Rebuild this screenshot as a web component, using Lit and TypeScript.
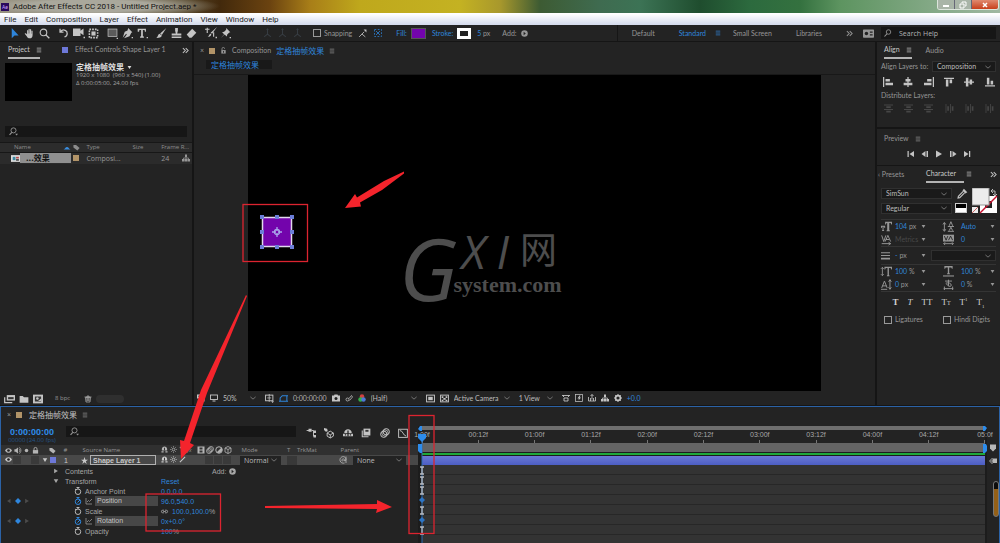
import { LitElement, html, svg, css, nothing } from "lit";
import { customElement, property } from "lit/decorators.js";

const S = (d: string, w = 1.5) => svg`<path d=${d} fill="none" stroke="currentColor" stroke-width=${w}/>`;
const F = (d: string) => svg`<path d=${d} fill="currentColor"/>`;

/* Every glyph is drawn on a 16 x 16 grid. */
const ICONS: Record<string, unknown> = {
  arrow: F("M4 0v15l4-4h6z"),
  hand: svg`${F("M4.500 9V3.500a1 1 0 0 1 1.700 0V8h.4V1.800a1 1 0 0 1 1.700 0V8h.4V2.300a1 1 0 0 1 1.700 0V8.500h.4V4.500a1 1 0 0 1 1.700 0V10c0 3-1.500 5-4 5-2.500 0-3.500-1-4.500-3L1 8.500c0-1.200 1.300-1.300 2-.5z")}`,
  zoom: svg`<circle cx="6.500" cy="6.500" r="4.800" fill="none" stroke="currentColor" stroke-width="1.600"/>${S("M10 10l5 5", 2)}`,
  rotate: S("M3 1v5h5M3.500 6C5 3 8 2.300 10.500 3.500c4 1.700 4 8-1 9.500", 1.9),
  camera: F("M0 2h10v3l4-3v9l-4-3v4H0zM14 13h2v2h-2z"),
  pan: svg`${F("M5 5h6v6H5z")}<path d="M2 2h12v12H2z" fill="none" stroke="currentColor" stroke-width="2.200" stroke-dasharray="2.500 1.500"/>`,
  rect: svg`<rect x="1.500" y="1.500" width="13" height="11" fill="#5a5a5a" stroke="currentColor"/>${F("M14 14h2v2h-2z")}`,
  pen: F("M9 0l6 6-1.500 1L11 12l-8 3 4-5.500-1-1-5 5.500L4 5.500l4-2zM14 13h2v2h-2z"),
  type: F("M1 1h12v4.500h-1.500L11 3H8.500v9l1.500.5V14H4.500v-1.500L6 12V3H3.500L3 5.500H1zM14 13h2v2h-2z"),
  brush: F("M15 0L8.500 10 6 8zM5 8.500l3.500 2.500c-1 3.500-4.500 3.500-8 3.500 2.500-1.500 2-5 4.500-6z"),
  stamp: F("M6 0h4v4L9 8h6v3H1V8h6L6 4zM1 12.500h14v2H1z"),
  eraser: F("M9 1l6 6-7 7H5L1 9.500z"),
  roto: svg`${F("M16 0L9.500 9 7.500 7.500zM7 8.500l1.500 1.500c-1 3-3 3-5 3 2-1 2-3 3.500-4.500zM14 13h2v2h-2z")}${S("M3 1v7M0 3h6M11.500 7v6", 1.500)}`,
  pin: F("M9 0l6 6-1.500.5-3 3-.5 3L6.500 9.500 1 15l5-6-3-3 3-.5 3-3zM14 13h2v2h-2z"),
  axis: svg`${S("M8 2v7M8 9l-5 4M8 9l5 4")}${F("M6 3l2-3 2 3z")}`,
  snapA: svg`${S("M2 14l9-9M7 9l6 5")}${F("M10 1h5v5z")}`,
  snapB: svg`<path d="M1 1h14v14H1z" fill="none" stroke="currentColor" stroke-width="1.500" stroke-dasharray="3.500 3"/>${S("M4 4l8 8M12 4l-8 8", 1.5)}`,
  plus: svg`<circle cx="8" cy="8" r="7.500" fill="currentColor"/><path d="M6 4l5 4-5 4z" fill="#222"/>`,
  menu: S("M2 3h12M2 8h12M2 13h12", 1.8),
  more: S("M2 2.500L7.500 8 2 13.500M8.500 2.500L14 8l-5.500 5.500", 2.3),
  film: svg`<rect x="0" y="2" width="16" height="12" rx="1" fill="currentColor"/><circle cx="5" cy="8" r="2.500" fill="#222"/><path d="M10 5h4v2h-4zM10 9h4v2h-4z" fill="#222"/>`,
  search: svg`<circle cx="9" cy="6" r="4.500" fill="none" stroke="currentColor" stroke-width="1.700"/>${S("M6 9.500L1 15", 2.2)}`,
  searchMenu: svg`<circle cx="8" cy="6" r="4.500" fill="none" stroke="currentColor" stroke-width="1.600"/>${S("M5 9.500L1 14", 2)}${F("M11 12h5l-2.500 3z")}`,
  lock: svg`${F("M2 7h12v8H2z")}${S("M4.500 7V4.500a3.500 3.500 0 0 1 7 0V7", 2)}`,
  unlock: svg`${F("M3 7h10v8H3z")}${S("M4.500 7V4a3 3 0 0 1 6 0", 1.8)}<path d="M7 9h2v4H7z" fill="#222"/>`,
  tag: F("M1 2h6l8 7-5 6L1 8z"),
  tree: svg`${F("M6 1h4v5H6zM0 10h5v5H0zM5.700 10h4.600v5H5.700zM11 10h5v5h-5z")}${S("M3 10V8h10v2M8 5v6", 1.5)}`,
  comp: svg`<rect x="0" y="2" width="16" height="12" fill="#ddd"/><path d="M3 5h5v6H3z" fill="#3d87a0"/><path d="M9 5h5v3H9z" fill="#b34a4a"/><path d="M9 9h5v3H9z" fill="#444"/>`,
  up: svg`<path d="M1 11c3-1 4-5 7-5s4 4 7 5z" fill="#3a8ee0"/>`,
  interpret: svg`${F("M4 3h12v8H4z")}${S("M1 6v8h11", 1.8)}<path d="M6 6h8v3H6z" fill="#333"/>`,
  folder: F("M1 3h5l2 2h7v9H1z"),
  newcomp: svg`${F("M0 1h16v14H0z")}<path d="M3 4h10v8H3z" fill="#333"/><circle cx="7" cy="7" r="2" fill="currentColor"/>${F("M8 11l5-4v4z")}`,
  trash: svg`${S("M3 5h10l-1 9H4zM1 4h14M6 4V2h4v2M6 6v6M8 6v6M10 6v6", 1.3)}`,
  chevron: S("M1 5l7 6 7-6", 2),
  tri: F("M2 3h12l-6 10z"),
  triR: F("M3 2v12l10-6z"),
  play: F("M2 1v14l12-7z"),
  first: F("M1 2h2.500v12H1zM14 2v12L5 8z"),
  prev: F("M9 2v12L1 8zM11 2h3v12h-3z"),
  next: F("M2 2h3v12H2zM7 2v12l8-6z"),
  last: F("M2 2v12l9-6zM12 2h2.500v12H12z"),
  alL: F("M0 0h2v16H0zM4 3h7v4H4zM4 9h12v4H4z"),
  alC: F("M7 0h2v16H7zM4 3h8v4H4zM1 9h14v4H1z"),
  alR: F("M14 0h2v16h-2zM5 3h7v4H5zM0 9h12v4H0z"),
  alT: F("M0 1h16v2H0zM3 4h4v11H3zM9 4h4v6H9z"),
  alM: F("M0 7h16v2H0zM3 1h4v14H3zM9 4h4v8H9z"),
  alB: F("M0 13h16v2H0zM3 1h4v11H3zM9 6h4v6H9z"),
  diH: F("M0 1h16v1.500H0zM4 4h8v3H4zM0 9h16v1.500H0zM4 12h8v3H4z"),
  diV: F("M1 0h1.500v16H1zM4 4h3v8H4zM9 0h1.500v16H9zM12 4h3v8h-3z"),
  eyedrop: svg`${F("M10 1l5 5-3 2-4-4z")}${S("M9 5l-7 7-.5 2.500L4 14l7-7", 1.6)}`,
  lines: F("M0 2h16v2H0zM0 7h16v2H0zM0 12h16v3H0z"),
  size: F("M6 1h10v4h-1l-1-2h-2v10l1 1v1H8v-1l1-1V3H8L7 5H6zM0 7h6v3H5L4.500 8.500h-.8V13l.8.500v1h-3v-1l.8-.5V8.500h-.8L1 10H0z"),
  leading: svg`${S("M2 3v11M0 5l2-3 2 3M0 12l2 3 2-3M7 15h9M7 8h9", 1.4)}${S("M9 7l2.500-6L14 7M9 14l2.500-5 2.500 5", 1.4)}`,
  kern: svg`${S("M1 2l3 9 3-9M6 11l4-9 4 9M7 8h5M1 14h13M11 12l3 2-3 2", 1.4)}`,
  track: svg`${F("M0 1h16v10H0z")}<path d="M2 3l2.500 6L7 3M8 9l3-6 3 6" fill="none" stroke="#222" stroke-width="1.300"/>${S("M1 14h14M3 12l-2 2 2 2M13 12l2 2-2 2", 1.3)}`,
  vscale: svg`${F("M5 1h11v4h-1l-1-2h-2.500v10l1 1v1H8.500v-1l1-1V3H7L6 5H5z")}${S("M2 2v12M0 4l2-2 2 2M0 12l2 2 2-2", 1.3)}`,
  hscale: svg`${F("M2 0h12v4h-1l-1-2H9v8l1 1v1H6v-1l1-1V2H4L3 4H2z")}${S("M0 14.500h16", 1.600)}`,
  shift: svg`${S("M1 13l4-10 4 10M2 10h6M0 15h9M13 1v13M11 4l2-3 2 3M11 12l2 3 2-3", 1.4)}`,
  tsume: svg`${S("M3 3h10M8 1v9M4 6c4-1 8 0 8 3s-5 2-7-2M1 14h14M2 11v5M14 11v5", 1.4)}`,
  eye: svg`<path d="M0 8c4-7 12-7 16 0-4 7-12 7-16 0z" fill="currentColor"/><circle cx="8" cy="8" r="3" fill="#222"/>`,
  speaker: svg`${F("M1 5h3l5-4v14l-5-4H1z")}${S("M11 4c3 2 3 6 0 8M12 1c5 3 5 11 0 14", 1.7)}`,
  solo: svg`<circle cx="8" cy="8" r="4" fill="currentColor"/>`,
  shy: svg`${F("M2 7c0-8 12-8 12 0v3H2zM1 12h5v3H1zM10 12h5v3h-5z")}<path d="M7 4h2v6H7z" fill="#222"/>`,
  sun: svg`<circle cx="8" cy="8" r="3" fill="none" stroke="currentColor" stroke-width="1.800"/>${S("M8 0v3M8 13v3M0 8h3M13 8h3M2.500 2.500l2 2M11.500 11.500l2 2M2.500 13.500l2-2M11.500 4.500l2-2", 1.3)}`,
  slash: S("M2 14L14 2", 2.4),
  back: S("M2 2l12 12", 2.4),
  frames: svg`<rect x="1" y="1" width="14" height="14" fill="currentColor"/><path d="M5 3h6v4H5zM5 9h6v4H5z" fill="#333"/>`,
  blur: svg`<circle cx="6" cy="10" r="5" fill="none" stroke="currentColor" stroke-width="1.600"/><circle cx="8" cy="8" r="5" fill="none" stroke="currentColor" stroke-width="1.200"/><circle cx="10" cy="6" r="5" fill="none" stroke="currentColor" stroke-width="1.600"/>`,
  adjust: svg`<circle cx="8" cy="8" r="6.500" fill="none" stroke="currentColor" stroke-width="2"/>${F("M3 13L13 3c4 4 0 14-10 10z")}`,
  cube: S("M8 1l6 3v8l-6 3-6-3V4zM2 4l6 3 6-3M8 7v8", 1.6),
  star: F("M8 0l2 6h6l-5 3.500 2 6.500-5-4-5 4 2-6.500L0 6h6z"),
  watch: svg`<circle cx="8" cy="9.500" r="5.500" fill="none" stroke="currentColor" stroke-width="1.800"/>${S("M8 4V1M5 1h6M2 4l2 1.500", 1.8)}`,
  watchOn: svg`<circle cx="8" cy="9.500" r="5.500" fill="none" stroke="currentColor" stroke-width="2"/>${S("M8 4V1M5 1h6M7 11l5-5", 2)}`,
  graph: S("M2 2v12h12M4 10l3-3 2 2 5-5", 1.4),
  kf: F("M8 0l8 8-8 8-8-8z"),
  kL: F("M12 2v12L3 8z"),
  link: svg`<path d="M7 5H4a3 3 0 0 0 0 6h3M9 5h3a3 3 0 0 1 0 6H9M5 8h6" fill="none" stroke="currentColor" stroke-width="2"/>`,
  spiral: S("M9 9c-1 2-4 1-3-1.500 1-3 6-2 5 2 3 1 4-4 1-7C8-1 1 3 2 9c1 5 6 6 9 5M14 1v13", 1.4),
  mini: svg`${S("M1 4h5M9 4h3v9h4M12 7h4", 1.500)}${F("M4 1h5v5H4zM12 4h4v4h-4zM12 11h4v4h-4z")}`,
  draft: svg`${S("M10 5l5 3v5l-5 3-5-3V8zM5 8l5 3 5-3M10 11v5", 1.5)}${F("M0 0l5 1 1 4-3 1-3-3z")}`,
  shyBig: svg`${F("M2 8c0-8 12-8 12 0zM0 9h16v4H0z")}<path d="M7 4h2v9H7zM3 10h2v2H3zM11 10h2v2h-2z" fill="#222"/>`,
  blend: svg`${F("M4 1h11v11H4z")}${S("M2 4v10h10", 1.7)}<path d="M7 3h5v3H7z" fill="#333"/>`,
  gedit: svg`<rect x="1" y="2" width="14" height="13" fill="none" stroke="currentColor" stroke-width="1.500"/>${S("M3 4c5 0 5 8 10 9", 1.5)}`,
  monitor: svg`<rect x="1" y="2" width="14" height="9" fill="none" stroke="currentColor" stroke-width="1.800"/>${F("M5 13h6v2H5z")}`,
  preview: svg`${F("M0 1h12v8H0zM8 8h7v7H8z")}<path d="M3 3h3v3H3zM10 10h3v2h-3z" fill="#222"/>`,
  safe: svg`<rect x="1" y="2" width="13" height="10" fill="none" stroke="currentColor" stroke-width="1.700"/>${S("M7.500 0v14M4 7h7", 1.4)}${F("M11 13h5l-2.500 3z")}`,
  mask: S("M2 13V7l4-4h8v10zM0 13h4M12 3h4M12 13h4M5 3h3", 1.8),
  snap: svg`${F("M0 3h4l1-2h6l1 2h4v12H0z")}<circle cx="8" cy="9" r="3" fill="#222"/>`,
  show: svg`<circle cx="5" cy="11" r="3" fill="none" stroke="currentColor" stroke-width="1.500"/>${S("M8 9l5-6 2 3-6 7", 1.5)}`,
  rgb: svg`<circle cx="8" cy="5" r="4.500" fill="#d24040"/><circle cx="5" cy="11" r="4.500" fill="#32b04a"/><circle cx="11" cy="11" r="4.500" fill="#4d78d8"/>`,
  roi: svg`<rect x="1" y="2" width="14" height="12" fill="none" stroke="currentColor" stroke-width="1.700"/>${F("M4 5h8v6H4z")}`,
  trans: svg`<rect x="1" y="2" width="14" height="12" fill="none" stroke="currentColor" stroke-width="1.700"/>${F("M3 4h3v3H3zM10 4h3v3h-3zM6 7h4v3H6zM3 10h3v3H3zM10 10h3v3h-3z")}`,
  aspect: svg`${S("M0 3h16M3 3v3M13 3v3M4 8h8v6H4z", 1.8)}`,
  fast: svg`<rect x="1" y="1" width="14" height="14" fill="none" stroke="currentColor" stroke-width="1.500"/>${F("M9 3L5 9h3l-1 4 5-6H9l2-4z")}`,
  timeline: S("M1 6v8h14V6M5 14V8M11 14V8M8 11V1M5 4l3-3 3 3", 1.7),
  gear: svg`<circle cx="8" cy="8" r="4.800" fill="none" stroke="currentColor" stroke-width="3.200"/>${S("M8 0v3M8 13v3M0 8h3M13 8h3M2.500 2.500l2 2M11.500 11.500l2 2M2.500 13.500l2-2M11.500 4.500l2-2", 2)}`,
  marker: F("M2 1h12v8l-6 6-6-6z"),
  handle: svg`${F("M7 3h9v9H7z")}${S("M7 2L1 8l6 6M3 8h6", 1.8)}`,
};

const icon = (name: string, size = 9, cls = "") => html`<svg class="ic ${cls}" width=${size} height=${size} viewBox="0 0 16 16" aria-hidden="true">${ICONS[name]}</svg>`;
const tool = (name: string, label: string, size = 11, cls = "") => html`<button class="tool ${cls}" aria-label=${label} title=${label}>${icon(name, size)}</button>`;

const base = css`
  * { box-sizing: border-box; }
  button, input, select { font: inherit; color: inherit; background: none; border: 0; padding: 0; margin: 0; min-width: 0; border-radius: 0; }
  button { white-space: nowrap; text-align: left; }
  .ic { display: block; flex: none; overflow: visible; }
  .tool { display: grid; place-items: center; color: #c4c4c4; }
  .blue { color: #2f86dc; }
  .row { display: flex; align-items: center; }
  .cjk { font-family: "Noto Sans CJK SC", sans-serif; }
  .tab { display: flex; align-items: center; gap: 6px; height: 16px; border-bottom: 2px solid transparent; }
  .tab.on { color: #cacaca; border-color: #b4b4b4; }
  .end { margin-left: auto; }
  select { appearance: none; width: 100%; height: 100%; display: block; }
  .pick { display: grid; grid-template-columns: 1fr 10px; align-items: center; color: #bcbcbc; }
  .pick > * { grid-row: 1; }
  .pick select { grid-column: 1 / 3; }
  .pick .ic { grid-column: 2; pointer-events: none; color: #8c8c8c; }
  .box { background: #1a1a1a; border: 1px solid #303030; height: 11px; padding-left: 4px; }
  input[type="checkbox"] { appearance: none; width: 8px; height: 8px; border: 1px solid #999; flex: none; }
  .sq { width: 6px; height: 6px; flex: none; }
  .tan { background: #b29468; }
  .iris { background: #6d78d8; }
  .search { display: flex; align-items: center; height: 11px; background: #161616; }
  .search input { flex: 1; }
`;

const picker = (label: string, value: string, cls = "") => html`
  <label class="pick ${cls}"><select aria-label=${label}><option>${value}</option></select>${icon("chevron", 6)}</label>`;

@customElement("ae-project")
class AeProject extends LitElement {
  static styles = [base, css`
    :host { display: flex; flex-direction: column; background: #232323; }
    .tabs { height: 17px; padding: 0 3px 0 8px; gap: 22px; }
    .fx { gap: 7px; }
    .info { display: flex; gap: 4px; padding: 4px 5px; height: 67px; }
    .thumb { width: 67px; height: 38px; background: #000; }
    .meta { line-height: 8px; font-size: 6px; font-family: "Open Sans", sans-serif; color: #a4a4a4; }
    .name { display: flex; align-items: center; gap: 3px; color: #ddd; font-size: 8px; font-weight: 700; line-height: 8px; }
    .search { margin: 0 5px; padding-left: 4px; }
    table { margin-top: 5px; border-collapse: collapse; table-layout: fixed; width: 100%; }
    th { font-weight: 400; text-align: left; height: 10px; background: #2c2c2c; border-top: 1px solid #171717; border-bottom: 1px solid #171717; font-size: 6px; font-family: "Open Sans", sans-serif; padding: 0; color: #8c8c8c; }
    td { height: 11px; padding: 0; background: #2b2b2b; line-height: 9px; font-family: "Open Sans", sans-serif; }
    .pad { padding-left: 14px; }
    .sel { flex: 1; background: #8f8f8f; color: #111; font-weight: 700; height: 10px; line-height: 10px; font-size: 8px; padding-left: 6px; }
    .foot { margin-top: auto; height: 13px; padding: 0 4px; gap: 4px; }
    .foot .bpc { margin: 0 10px 0 8px; font-size: 6px; font-family: "Open Sans", sans-serif; }
    .pill { width: 28px; height: 8px; border-radius: 4px; background: #2f2f2f; }
    .item { padding: 0 2px 0 11px; }
    .split { justify-content: space-between; padding-right: 2px; }
  `];
  render() {
    return html`
      <div class="row tabs"><button class="tab on">Project ${icon("menu", 6)}</button>
        <button class="tab fx"><span class="sq iris"></span>Effect Controls Shape Layer 1</button>
        <button class="tool end" aria-label="More panels">${icon("more", 7)}</button></div>
      <div class="info"><div class="thumb"></div><div class="meta">
        <div class="name"><span class="cjk">定格抽帧效果</span>${icon("tri", 5)}</div>
        <div>1920 x 1080 &nbsp;(960 x 540) (1.00)</div><div>Δ 0:00:05:00, 24.00 fps</div></div></div>
      <label class="search">${icon("searchMenu", 9)}<input aria-label="Search project"></label>
      <table><colgroup><col style="width:38%"><col style="width:7%"><col style="width:24%"><col style="width:15%"><col></colgroup>
        <tr><th><div class="row split"><span class="pad">Name</span>${icon("up", 8)}</div></th><th>${icon("tag", 7)}</th><th>Type</th><th>Size</th><th>Frame R...</th></tr>
        <tr><td><div class="row item">${icon("comp", 9)}<div class="sel cjk">...效果</div></div></td><td><div class="sq tan"></div></td><td>Composi...</td><td></td>
          <td><div class="row split"><span>24</span>${icon("tree", 8)}</div></td></tr></table>
      <div class="row foot">${tool("interpret", "Interpret footage")}${tool("folder", "New folder", 10)}${tool("newcomp", "New composition", 10)}
        <button class="bpc">8 bpc</button>${tool("trash", "Delete", 8)}<span class="pill"></span></div>`;
  }
}

@customElement("ae-viewer")
class AeViewer extends LitElement {
  static styles = [base, css`
    :host { display: flex; flex-direction: column; background: #232323; }
    .tabs { height: 17px; padding-left: 6px; gap: 5px; }
    .crumb { height: 16px; padding-left: 12px; border-bottom: 1px solid #181818; }
    .crumb button { width: 66px; height: 9px; line-height: 9px; background: #191919; padding-left: 5px; margin-bottom: 4px; }
    .cjk { font-size: 8px; }
    .stage { flex: 1; margin: 0 54px; background: #000; position: relative; overflow: hidden; }
    .shape { position: absolute; left: 10px; top: 138px; }
    .mark { position: absolute; left: 151px; top: 153px; display: flex; color: #4d4d4d; }
    .g { font: italic 86px/80px "Open Sans", sans-serif; margin-right: -4px; }
    .xi { display: flex; gap: 11px; padding-left: 8px; font: italic 46px/46px "Open Sans", sans-serif; height: 46px; }
    .net { font: 37px/40px "Noto Sans CJK SC", sans-serif; }
    .dom { font: bold 22px/22px "Liberation Serif", serif; }
    .foot { height: 14px; padding-left: 3px; color: #b0b0b0; gap: 5px; }
    .pick { height: 11px; }
    .p50 { width: 37px; }
    .half { width: 50px; } .cam { width: 60px; } .view { width: 38px; }
  `];
  render() {
    return html`
      <div class="row tabs"><span>×</span><span class="sq tan"></span>${icon("unlock", 7)}
        <span>Composition</span><span class="cjk blue">定格抽帧效果</span>${icon("menu", 6)}</div>
      <div class="row crumb"><button class="cjk blue">定格抽帧效果</button></div>
      <div class="stage">
        <svg class="shape" width="40" height="40" viewBox="0 0 40 40" role="img" aria-label="Selected square">
          <rect x="4.500" y="4.500" width="29" height="29" fill="#7304ac" stroke="#e2d8ee" stroke-width="1.500"/>
          <g fill="#6c7ed8">${[4, 19, 34].map(x => [4, 19, 34].map(y => x === 19 && y === 19 ? nothing : svg`<rect x=${x - 2} y=${y - 2} width="4" height="4"/>`))}</g>
          <g stroke="#a9a3ea" fill="none" stroke-width="1.300"><circle cx="19" cy="19" r="2.500"/><path d="M19 14v4M19 20v4M14 19h4M20 19h4"/></g></svg>
        <div class="mark"><span class="g">G</span><div><div class="xi"><span>X</span><span>I</span><span class="net">网</span></div><div class="dom">system.com</div></div></div>
      </div>
      <div class="row foot">
        ${tool("preview", "Always preview", 8)}${tool("monitor", "Primary viewer", 8)}${picker("Magnification", "50%", "p50")}
        ${tool("safe", "Guides", 9)}${tool("mask", "Mask visibility", 9, "blue")}<button>0:00:00:00</button>
        ${tool("snap", "Take snapshot", 8)}${tool("show", "Show snapshot", 8)}${tool("rgb", "Channels", 8)}
        ${picker("Resolution", "(Half)", "half")}${tool("roi", "Region of interest", 9)}${tool("trans", "Transparency grid", 9)}
        ${picker("3D view", "Active Camera", "cam")}${picker("View layout", "1 View", "view")}
        ${tool("aspect", "Pixel aspect", 8)}${tool("fast", "Fast previews", 8)}${tool("timeline", "Timeline", 8)}${tool("tree", "Flowchart", 8)}
        ${tool("gear", "Reset exposure", 8)}<button class="blue">+0.0</button></div>`;
  }
}

@customElement("ae-side")
class AeSide extends LitElement {
  static styles = [base, css`
    :host { display: flex; flex-direction: column; gap: 2px; }
    section { background: #232323; padding: 0 4px; }
    section:last-child { flex: 1; }
    .tabs { gap: 14px; height: 17px; padding-left: 3px; }
    .to { display: grid; grid-template-columns: 51px 1fr; padding: 2px 0 1px; align-items: center; }
    .grid6 { display: grid; grid-template-columns: repeat(6, 1fr); height: 17px; margin: 0 -4px 0 -3px; }
    .dim { color: #464646; }
    .dist { line-height: 10px; }
    .align { height: 85px; }
    .preview { height: 36px; padding-top: 2px; }
    .play { display: flex; justify-content: center; gap: 6px; height: 12px; }
    .char { margin-top: -2px; border-top: 1px solid #151515; }
    .char .tabs { padding: 0; margin-left: -3px; gap: 26px; }
    .font { display: grid; grid-template-columns: 71px 14px 1fr; gap: 3px 3px; padding: 5px 0; border-bottom: 1px solid #343434; }
    .swatch { grid-area: 1 / 3 / 3 / 4; }
    .bw { border: 1px solid #ccc; background: linear-gradient(#000 50%, #fff 50%); width: 12px; height: 10px; }
    .vals { display: grid; grid-template-columns: 14px 26px 22px 18px 29px 1fr; align-items: center; height: 13px; }
    .sect { border-bottom: 1px solid #343434; }
    .stroke { display: grid; grid-template-columns: 14px 26px 10px 1fr; align-items: center; height: 18px; }
    .styles { height: 21px; justify-content: center; gap: 9px; font: 9px/11px "Liberation Serif", serif; color: #d0d0d0; }
    .b { font-weight: 700; } .i { font-style: italic; }
    .sc { font-variant: small-caps; }
    sup, sub { font-size: 5px; line-height: 0; }
    .checks { display: grid; grid-template-columns: 59px 1fr; padding: 2px 3px; }
    .checks label { display: flex; gap: 3px; align-items: center; }
    .off { color: #484848; }
  `];
  private val(a: string, v: unknown, b: string, w: unknown) {
    return html`<div class="vals">${icon(a, 11)}<button>${v}</button>${icon("tri", 5)}${icon(b, 11)}<button>${w}</button>${icon("tri", 5)}</div>`;
  }
  render() {
    const n = (v: string, u = "") => html`<span class="blue">${v}</span> ${u}`;
    return html`
      <section class="align"><div class="row tabs"><button class="tab on">Align ${icon("menu", 6)}</button><button>Audio</button></div>
        <div class="to"><span>Align Layers to:</span>${picker("Align layers to", "Composition", "box")}</div>
        <div class="grid6">${["alL", "alC", "alR", "alT", "alM", "alB"].map(i => tool(i, i, 10))}</div>
        <div class="dist">Distribute Layers:</div>
        <div class="grid6">${["diH", "diH", "diH", "diV", "diV", "diV"].map(i => tool(i, i, 9, "dim"))}</div></section>
      <section class="preview"><div class="row tabs"><button class="tab">Preview ${icon("menu", 6)}</button></div>
        <div class="play">${["first", "prev", "play", "next", "last"].map(i => tool(i, i, 8))}</div></section>
      <section class="char"><div class="row tabs"><button>‹ Presets</button><button class="tab on">Character &nbsp;${icon("menu", 6)}</button>
        <button class="tool end" aria-label="More panels">${icon("more", 7)}</button></div>
        <div class="font">${picker("Font", "SimSun", "box")}${tool("eyedrop", "Eyedropper", 11)}
          ${picker("Style", "Regular", "box")}<span class="bw"></span>
          <svg class="swatch" width="26" height="26" viewBox="0 0 26 26" role="img" aria-label="Fill and stroke">
            <rect x="8" y="8" width="17" height="17" fill="#fff"/><rect x="13" y="13" width="7" height="7" fill="#222"/><path d="M8 25L25 8" stroke="#c8102e" stroke-width="1.500"/>
            <rect x="0" y="0" width="17" height="17" fill="#ececec" stroke="#999"/><rect x="0" y="19" width="6" height="6" fill="#eee"/><path d="M0 25l6-6" stroke="#c66"/>
            <path d="M19 3h4v4M21 1l-2 2 2 2M21 6l2 2 2-2" stroke="#bbb" fill="none"/></svg></div>
        <div class="sect">${this.val("size", n("104", "px"), "leading", n("Auto"))}${this.val("kern", html`<span class="off">Metrics</span>`, "track", n("0"))}</div>
        <div class="sect stroke">${icon("lines", 9)}<button>${n("-", "px")}</button>${icon("tri", 5)}${picker("Stroke style", "", "box")}</div>
        <div class="sect">${this.val("vscale", n("100", "%"), "hscale", n("100", "%"))}${this.val("shift", n("0", "px"), "tsume", n("0", "%"))}</div>
        <div class="row styles"><button class="b">T</button><button class="i">T</button><button>TT</button><button class="sc">Tt</button><button>T<sup>1</sup></button><button>T<sub>1</sub></button></div>
        <div class="checks"><label><input type="checkbox">Ligatures</label><label><input type="checkbox">Hindi Digits</label></div>
      </section>`;
  }
}

interface Prop { name: string; value: unknown; key?: boolean; link?: boolean; }

@customElement("ae-timeline")
class AeTimeline extends LitElement {
  @property({ attribute: false }) props: Prop[] = [
    { name: "Anchor Point", value: "0.0,0.0" },
    { name: "Position", value: "96.0,540.0", key: true },
    { name: "Scale", value: html`100.0,100.0<span class="unit">%</span>`, link: true },
    { name: "Rotation", value: "0x+0.0°", key: true },
    { name: "Opacity", value: html`100<span class="unit">%</span>` },
  ];
  static styles = [base, css`
    :host { display: flex; flex-direction: column; background: #232323; border: 1px solid #2b62a6; border-bottom: 0; font-family: "Liberation Sans", sans-serif; }
    .tabs { height: 15px; padding-left: 6px; gap: 5px; }
    .tabs .cjk { color: #c0c0c0; font-size: 8px; }
    .body { display: grid; grid-template-columns: 417px 1fr 12px; flex: 1; margin-top: 4px; }
    .bar { height: 19px; display: flex; }
    .time { width: 54px; margin: 0 7px 0 4px; text-align: center; color: #2d8ceb; }
    .time b { display: block; font-size: 9px; line-height: 9px; }
    .time small { display: block; font-size: 6px; line-height: 6px; color: #255488; font-family: "Open Sans", sans-serif; }
    .search { width: 230px; padding-left: 4px; }
    .opts { display: flex; padding: 0 10px; height: 13px; flex: 1; justify-content: space-between; }
    .head, .layer { display: grid; grid-template-columns: 38px 20px 19px 79px 80px 47px 10px 42px 1fr; padding-left: 3px; height: 10px; align-items: center; }
    .head { background: #303030; font-size: 6px; font-family: "Open Sans", sans-serif; }
    .layer { background: #484848; color: #c8c8c8; margin-bottom: 1px; }
    .head .ic { color: #b4b4b4; }
    .four { display: grid; grid-template-columns: repeat(4, 9px); }
    .eight { display: grid; grid-template-columns: repeat(8, 9px); }
    .eight .ic, .four .ic { justify-self: center; }
    .ctr { justify-content: center; }
    .lname { border: 1px solid #b0b0b0; width: 66px; height: 10px; line-height: 9px; padding-left: 2px; margin-left: 2px; font-weight: 700; }
    .pick { background: #232323; height: 9px; font-family: "Open Sans", sans-serif; color: #bbb; }
    .pick.mode { width: 41px; padding-left: 4px; }
    .dark { background: #383838; height: 9px; }
    .hole { background: #3a3a3a; width: 8px; height: 8px; }
    .parent { display: grid; grid-template-columns: 14px 1fr 12px; align-items: center; }
    .parent .pick { padding-left: 4px; }
    .prop { display: grid; grid-template-columns: 49px 17px 15px 73px 1fr; padding-left: 3px; height: 10px; align-items: center; color: #a6a6a6; }
    .nav { display: grid; grid-template-columns: repeat(3, 9px); place-items: center; color: #4c4c4c; }
    .hl { background: #474747; height: 10px; line-height: 10px; padding-left: 2px; color: #c4c4c4; flex: 1; }
    .pn { gap: 2px; }
    .grp { gap: 6px; grid-column: 2 / 5; }
    .val { padding-left: 3px; gap: 4px; }
    .add { padding-left: 54px; gap: 3px; }
    .unit { color: #a0a0a0; }
    .right { position: relative; padding: 0 2px 0 4px; background: #1c1c1c; display: flex; flex-direction: column; }
    .nav-bar { height: 4px; background: #6e6e6e; }
    .ruler { height: 13px; background: #232323; display: flex; justify-content: space-between; font: 7px/10px "Liberation Sans", sans-serif; color: #a8a8a8; }
    .ruler div { width: 0; display: flex; flex-direction: column; align-items: center; }
    .ruler i { width: 1px; height: 3px; background: #777; }
    .work { height: 9px; background: #646464; }
    .cache { height: 2px; background: #1fa83a; margin: 1px 0; }
    .clip { height: 9px; background: linear-gradient(#6a78d4, #4c5ec4); }
    .lane { height: 10px; background: #333; border-bottom: 1px solid #272727; }
    .rest { flex: 1; background: #333; }
    .over { position: absolute; left: 0; top: 0; }
    .over.last { left: auto; right: 0; }
    .edge { display: flex; flex-direction: column; align-items: center; padding-top: 18px; gap: 5px; color: #b8b8b8; }
    .thumb { align-self: flex-end; width: 6px; height: 36px; margin-top: 11px; border: 1px solid #777; border-radius: 3px; background: linear-gradient(#0c0c0c 22%, #946018 22%); }
  `];
  private head() {
    return html`<div class="head">
      <div class="four">${["eye", "speaker", "solo", "lock"].map(i => icon(i, 7))}</div>
      <div class="row ctr">${icon("tag", 7)}</div><span>&nbsp;#</span><span>&nbsp;Source Name</span>
      <div class="eight">${["shy", "sun", "back"].map(i => icon(i, 7))}<i>fx</i>${["frames", "blur", "adjust", "cube"].map(i => icon(i, 8))}</div>
      <span>&nbsp;Mode</span><span>T</span><span>TrkMat</span><span>&nbsp;Parent</span></div>`;
  }
  private prop(p: Prop) {
    return html`<div class="prop"><div class="nav">${p.key ? html`${icon("kL", 6)}${icon("kf", 6, "blue")}${icon("triR", 6)}` : nothing}</div>
      <span></span>${tool(p.key ? "watchOn" : "watch", "Animate " + p.name, 8, p.key ? "blue" : "")}
      <div class="row pn">${p.key ? icon("graph", 8) : nothing}<span class=${p.key ? "hl" : ""}>${p.name}</span></div>
      <div class="row val">${p.link ? icon("link", 7) : nothing}<button class="blue">${p.value}</button></div></div>`;
  }
  render() {
    const marks = ["1:00f", "00:12f", "01:00f", "01:12f", "02:00f", "02:12f", "03:00f", "03:12f", "04:00f", "04:12f", "05:0f"];
    return html`
      <div class="row tabs"><span>×</span><span class="sq tan"></span><span class="cjk">&nbsp;定格抽帧效果</span>${icon("menu", 6)}</div>
      <div class="body">
        <div>
          <div class="bar"><button class="time"><b>0:00:00:00</b><small>00000 (24.00 fps)</small></button>
            <label class="search">${icon("searchMenu", 9)}<input aria-label="Search timeline"></label>
            <div class="opts">${["mini", "draft", "shyBig", "blend", "blur", "gedit"].map(i => tool(i, i, 10))}</div></div>
          ${this.head()}
          <div class="layer"><div class="four">${icon("eye", 7)}<span class="hole"></span><span></span><span class="hole"></span></div>
            <div class="row">${icon("tri", 6)}<span>&nbsp;</span><span class="sq iris"></span></div><span>&nbsp;1</span>
            <div class="row">${icon("star", 7)}<span class="lname">Shape Layer 1</span></div>
            <div class="eight">${["shy", "sun", "slash"].map(i => icon(i, 7))}<span></span><span></span><span class="hole"></span><span class="hole"></span><span class="hole"></span></div>
            ${picker("Mode", "Normal", "mode")}<span class="dark"></span><span></span>
            <div class="parent">${icon("spiral", 8)}${picker("Parent", "None")}<span></span></div></div>
          <div class="prop"><span></span><div class="row grp">${icon("triR", 6)}<span>Contents</span></div><div class="row add">Add: ${icon("plus", 7)}</div></div>
          <div class="prop"><span></span><div class="row grp">${icon("tri", 6)}<span>Transform</span></div><div class="row val"><button class="blue">Reset</button></div></div>
          ${this.props.map(p => this.prop(p))}
        </div>
        <div class="right">
          <div class="nav-bar"></div>
          <div class="ruler">${marks.map(m => html`<div>${m}<i></i></div>`)}</div>
          <div class="work"></div><div class="cache"></div><div class="clip"></div>
          ${[0, 1, 2, 3, 4, 5, 6].map(() => html`<div class="lane"></div>`)}<div class="rest"></div>
          <svg class="over" width="9" height="118" viewBox="0 0 9 118" aria-hidden="true">
            <path d="M4 10v108" stroke="#2c6cb4"/>
            <path d="M4 0v5H2L0 3l2-3zM0 8h8v4l-4 4-4-4zM0 18h4v9H2l-2-2z" fill="#2d8ceb"/>
            ${[0, 1, 2, 3, 4, 5, 6].map(i => i === 3 || i === 5
              ? svg`<path d="M4 ${41 + i * 10}l3 3-3 3-3-3z" fill="#2d74c4"/>`
              : svg`<path d="M2 ${41 + i * 10}h4M4 ${41 + i * 10}v7M2 ${48 + i * 10}h4" stroke="#b9bcc2" stroke-width="1.300"/>`)}</svg>
          <svg class="over last" width="4" height="28" viewBox="0 0 4 28" aria-hidden="true"><path d="M0 0h2l2 2-2 3H0zM0 18h3l1 2v5l-2 2H0z" fill="#2d8ceb"/></svg>
        </div>
        <div class="edge">${icon("marker", 8)}${icon("handle", 8)}<span class="thumb"></span></div>
      </div>`;
  }
}

@customElement("app-root")
class AppRoot extends LitElement {
  static styles = [base, css`
    :host { display: flex; flex-direction: column; position: relative; min-height: 100vh; overflow: hidden; background: #151515; color: #969696; font: 7px/9px Lato, sans-serif; }
    .title { height: 13px; display: flex; align-items: center; gap: 4px; padding-left: 1px; color: #111; font-size: 8px; font-family: Roboto, sans-serif;
      background: radial-gradient(ellipse 130px 12px at 90px 6px, #aaa89c 50%, transparent), linear-gradient(90deg, #8f8874 0, #57482c 18%, #42290c 22%, #6b4310 27%, #a87e18 31%, #bfa81c 36%, #c4b222 46%, #a8982c 50%, #3d5b33 54%, #3f6b50 60%, #3c7355 64%, #1f4d2e 70%, #2c6a3e 75%, #34713f 80%, #5d9460 84%, #a0b8a2 100%); }
    .logo { width: 8px; height: 8px; background: #2a0a5c; color: #c9a4ff; font-size: 5px; line-height: 8px; text-align: center; }
    .win { margin-left: auto; align-self: flex-start; display: flex; height: 10px; margin-right: 1px; border: 1px solid #dce5dc; border-top: 0; border-radius: 0 0 3px 3px; overflow: hidden; }
    .win button { display: grid; place-items: center; width: 17px; background: #a9b5a8; color: #fff; border-right: 1px solid #667; }
    .win .close { width: 26px; background: linear-gradient(#e08a70, #c8401c); border: 0; }
    .menu { height: 12px; display: flex; align-items: center; gap: 8px; padding-left: 4px; color: #222; background: linear-gradient(#fff, #d3daec); font-size: 8px; font-family: Roboto, sans-serif; border-top: 1px solid #fff; }
    .tools { height: 16px; background: #232323; display: flex; align-items: center; margin-bottom: 1px; padding: 0 4px 0 7px; }
    .g { display: grid; grid-auto-flow: column; grid-auto-columns: 15px; margin-right: 4px; height: 14px; }
    .gap { gap: 4px; padding-left: 3px; }
    .faint { margin: 0 8px 0 23px; }
    .faint .tool { color: #363c42; }
    .snapping { display: flex; align-items: center; gap: 3px; margin-right: 3px; }
    .fill { width: 15px; height: 11px; background: #7304ac; border: 1px solid #555; margin-right: 2px; }
    .str { width: 14px; height: 11px; border: 3px solid #fff; background: #222; margin-right: 2px; }
    .ws { display: flex; align-items: center; margin-left: auto; gap: 24px; padding-left: 14px; border-left: 1px solid #161616; height: 16px; }
    .std { display: flex; align-items: center; gap: 9px; }
    .std + button { margin-left: -12px; }
    .ws .icons { display: flex; gap: 10px; align-items: center; }
    .help { width: 115px; margin-left: 7px; gap: 7px; padding-left: 3px; height: 12px; font-family: "Open Sans", sans-serif; }
    .help input::placeholder { color: #b4b4b4; opacity: 1; }
    .main { flex: 1; display: grid; grid-template-columns: 192px 1fr 123px; gap: 2px; margin-bottom: 1px; }
    ae-timeline { height: 137px; }
    .notes { position: absolute; left: 0; top: 0; pointer-events: none; }
  `];
  render() {
    return html`
      <header class="title"><span class="logo">Ae</span>Adobe After Effects CC 2018 - Untitled Project.aep *
        <div class="win"><button aria-label="Minimize"><svg width="8" height="6"><path d="M1 4h6" stroke="#fff" stroke-width="2"/></svg></button>
          <button aria-label="Restore"><svg width="8" height="8"><path d="M3 2V1h4v4H6M1 3h4v4H1z" fill="none" stroke="#fff"/></svg></button>
          <button class="close" aria-label="Close"><svg width="8" height="8"><path d="M2 2l4 4M6 2L2 6" stroke="#fff" stroke-width="1.500"/></svg></button></div></header>
      <nav class="menu">${["File", "Edit", "Composition", "Layer", "Effect", "Animation", "View", "Window", "Help"].map(m => html`<button>${m}</button>`)}</nav>
      <div class="tools">
        <div class="g">${tool("arrow", "Selection", 11, "blue")}${tool("hand", "Hand")}${tool("zoom", "Zoom")}</div>
        <div class="g">${tool("rotate", "Rotate")}${tool("camera", "Camera", 12)}${tool("pan", "Anchor point")}</div>
        <div class="g">${tool("rect", "Rectangle", 11)}${tool("pen", "Pen")}${tool("type", "Type")}</div>
        <div class="g">${tool("brush", "Brush")}${tool("stamp", "Clone")}${tool("eraser", "Eraser")}</div>
        <div class="g">${tool("roto", "Roto brush", 12)}${tool("pin", "Puppet pin")}</div>
        <div class="g faint">${tool("axis", "Local axis")}${tool("axis", "World axis")}${tool("axis", "View axis")}</div>
        <label class="snapping"><input type="checkbox">Snapping</label>
        <div class="g">${tool("snapA", "Snap edges", 9)}${tool("snapB", "Snap inside", 8, "blue")}</div>
        <div class="row gap"><span></span><span class="blue">Fill:</span><button class="fill" aria-label="Fill colour"></button>
          <span class="blue">Stroke:</span><button class="str" aria-label="Stroke colour"></button>
          <button><span class="blue">5</span> px</button><span></span><span></span><span>Add:</span>${icon("plus", 7)}</div>
        <div class="ws"><button>Default</button><div class="std blue"><button>Standard</button>${icon("menu", 6)}</div><button>Small Screen</button><button>Libraries</button>
          <div class="icons">${icon("more", 7)}${icon("film", 11)}</div></div>
        <label class="search help">${icon("search", 8)}<input aria-label="Search Help" placeholder="Search Help"></label>
      </div>
      <main class="main"><ae-project></ae-project><ae-viewer></ae-viewer><ae-side></ae-side></main>
      <ae-timeline></ae-timeline>
      <svg class="notes" width="1000" height="543" viewBox="0 0 1000 543" aria-hidden="true">
        <g fill="none" stroke="#dc2430" stroke-width="1.300"><rect x="243" y="204.500" width="64.500" height="57"/><rect x="146" y="494" width="74.500" height="37"/><rect x="409" y="415.500" width="25" height="118"/></g>
        <g fill="#f4242c"><path d="M345 208l10-14 2 3.500L384 181l20-9.500v2L382 190l-22 12.500 1 4z"/>
          <path d="M246 295L201 390 184 441l-4-1 1 19 13-14-4-2 17-50 40-97z"/><path d="M265 506l112-2v-4l15 7-16 6 1-4-112-1z"/></g></svg>`;
  }
}
